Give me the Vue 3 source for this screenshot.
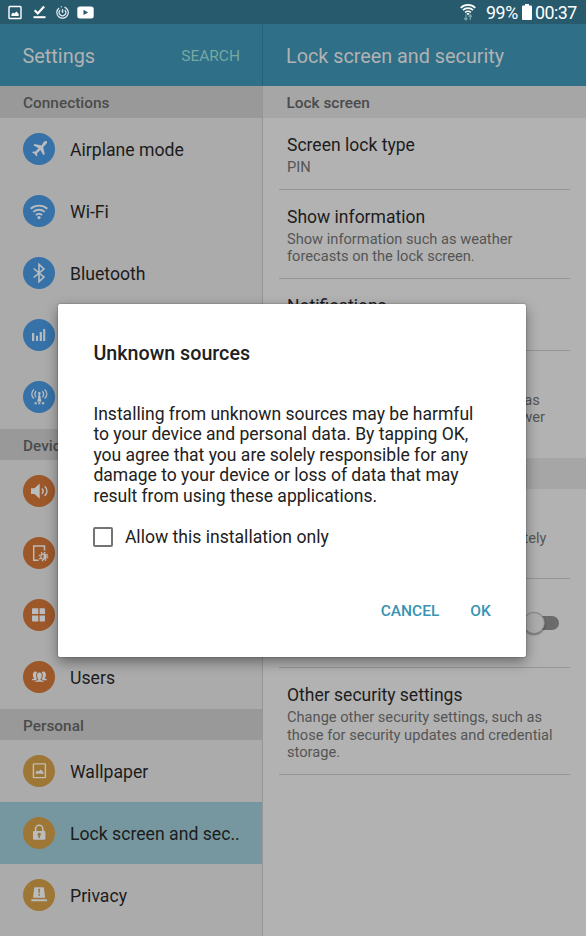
<script setup>
const groups = [
  {
    name: 'Connections', tone: 'blue', items: [
      { label: 'Airplane mode', icon: 'plane' },
      { label: 'Wi-Fi', icon: 'wifi' },
      { label: 'Bluetooth', icon: 'bluetooth' },
      { label: '', icon: 'data' },
      { label: '', icon: 'tower' },
    ],
  },
  {
    name: 'Device', tone: 'orange', items: [
      { label: '', icon: 'sound' },
      { label: '', icon: 'display' },
      { label: '', icon: 'apps' },
      { label: 'Users', icon: 'users' },
    ],
  },
  {
    name: 'Personal', tone: 'amber', items: [
      { label: 'Wallpaper', icon: 'wallpaper' },
      { label: 'Lock screen and sec..', icon: 'lock', active: true },
      { label: 'Privacy', icon: 'privacy' },
    ],
  },
]
</script>

<template>
  <div class="screen">
    <header class="status">
      <div class="status-left">
        <svg class="s-pic" viewBox="0 0 14 14"><rect x="1" y="1" width="12" height="12" rx=".8" fill="none" stroke="#fff" stroke-width="1.4" /><path d="M3.4 10.500V8.700L5 7l1.300 1.100L8.500 6l2.200 2.500v2z" fill="#fff" /></svg>
        <svg class="s-check" viewBox="0 0 13 14"><path d="M1.700 5.300l3.100 3.200 6.300-7" fill="none" stroke="#fff" stroke-width="2.200" /><path d="M.5 11.200h12v2H.5z" fill="#fff" /></svg>
        <svg class="s-swirl" viewBox="0 0 13 13" fill="none" stroke="#e6eef1" stroke-width="1.200"><path d="M3.100 1.900A5.700 5.700 0 1 0 8.500 1.100M4.100 4.100a3.300 3.300 0 1 0 4.700 0" /><path d="M6.500 3.300v3.500" stroke-width="1.500" /><path d="M4.800.9l1-.2" /></svg>
        <svg class="s-tube" viewBox="0 0 17 13"><rect x=".3" y=".4" width="16.400" height="12" rx="2.500" fill="#fff" /><path d="M6.500 3.700v5.400l4.700-2.700z" fill="#285a6d" /></svg>
      </div>
      <div class="status-right">
        <svg class="s-wifi" viewBox="0 0 16 17"><g fill="none" stroke="#fff" stroke-width="1.600"><path d="M.7 3.800a10.500 10.500 0 0 1 14.600 0M2.900 6.200a7.400 7.400 0 0 1 10.200 0M5.100 8.500a4.200 4.200 0 0 1 5.800 0" /></g><path d="M6.300 9.700a2.500 2.500 0 0 1 3.400 0L8 11.300z" fill="#fff" /><path d="M6 10.500v5M4.200 14L6 16l1.500-2M10.300 16v-5M8.700 12.800l1.600-2 1.600 2" fill="none" stroke="#78a4ae" stroke-width="1.200" /></svg>
        <span class="pct">99%</span>
        <svg class="s-batt" viewBox="0 0 10 16"><path d="M3 0h4v1.500h2a1 1 0 0 1 1 1V15a1 1 0 0 1-1 1H1a1 1 0 0 1-1-1V2.500a1 1 0 0 1 1-1h2z" fill="#fff" /></svg>
        <span class="clock">00:37</span>
      </div>
    </header>

    <div class="panes">
      <aside class="side">
        <div class="bar"><span class="bar-title">Settings</span><span class="search">SEARCH</span></div>
        <template v-for="g in groups" :key="g.name">
          <div class="section">{{ g.name }}</div>
          <div v-for="i in g.items" :key="i.icon" class="row" :class="{ active: i.active }">
            <span class="disc" :class="g.tone">
              <svg viewBox="0 0 32 32" fill="#b9bdc0" stroke="none">
                <path v-if="i.icon === 'plane'" d="M23.7 8.300c.8.8.2 2.100-.7 3l-2.800 2.800 1.500 7-1.300 1.200-3-5.200-3.300 3.200.2 2.300-1 1-1.500-2.700-2.700-1.500 1-1 2.300.2 3.200-3.300-5.200-3 1.200-1.300 7 1.500L20.700 9c.9-.9 2.200-1.500 3-.7z" />
                <g v-else-if="i.icon === 'wifi'" fill="none" stroke="#b9bdc0" stroke-width="1.900"><path d="M7.700 13.700a12.800 12.800 0 0 1 16.600 0M10.300 16.900a8.800 8.800 0 0 1 11.400 0M12.900 20a4.700 4.700 0 0 1 6.200 0" /><circle cx="16" cy="22.600" r="1.600" fill="#b9bdc0" stroke="none" /></g>
                <path v-else-if="i.icon === 'bluetooth'" d="M10.700 11.500l10.300 8.600-5 4.600V7.300l5 4.600-10.300 8.600" fill="none" stroke="#b9bdc0" stroke-width="1.600" />
                <path v-else-if="i.icon === 'data'" d="M9 14h2.200v8H9zM13 16.700h2v5.300h-2zM16.700 13h2.200v9h-2.200zM20.200 10h2v12h-2z" />
                <g v-else-if="i.icon === 'tower'" fill="none" stroke="#b9bdc0" stroke-width="1.300"><path d="M11 8.500c-3 2.500-3 6.500 0 9M13.200 10.200c-1.800 1.700-1.800 4.200 0 5.900M21.600 8.500c3 2.500 3 6.500 0 9M19.300 10.200c1.800 1.700 1.800 4.200 0 5.900" /><path d="M16.300 13l-1.300 7h2.600z" fill="#b9bdc0" /><circle cx="16.300" cy="12.300" r="1.300" fill="#b9bdc0" stroke="none" /><path d="M11.500 22.300h2.200M15.200 22.300h2.200M19 22.300h2.200" stroke-width="2" /></g>
                <g v-else-if="i.icon === 'sound'"><path d="M8 13.200h3.500l5.200-4.700v15.200l-5.200-4.800H8z" /><path d="M18.900 13.500c1.600 1.500 1.600 3.700 0 5.200M21.600 11.200c3.200 2.800 3.200 7 0 9.700" fill="none" stroke="#bdbab8" stroke-width="1.500" /></g>
                <g v-else-if="i.icon === 'display'"><path d="M15.600 23.200H10.700V9h10.800v4.500" fill="none" stroke="#bdbab8" stroke-width="1.500" /><circle cx="20.500" cy="19.600" r="3.300" /><circle cx="20.500" cy="19.600" r="4.100" fill="none" stroke="#bdbab8" stroke-width="1.400" stroke-dasharray="1.500 1.720" /><path d="M20.500 17.500a2.100 2.100 0 0 0 0 4.200z" fill="#9c5829" /></g>
                <path v-else-if="i.icon === 'apps'" d="M10 9.300h5.300v5.800H9v-4.800a1 1 0 0 1 1-1zM16.600 9.300h4.400a1 1 0 0 1 1 1v4.800h-5.400zM9 16.500h6.300v6H10a1 1 0 0 1-1-1zM16.600 16.500H22v5a1 1 0 0 1-1 1h-4.400z" />
                <g v-else-if="i.icon === 'users'"><path d="M13 19.300H8.600c0-1.200 1-1.400 2.600-1.900-2-2-1.700-6.600.9-6.900 1 0 1.700.3 1.900.8-1.400 2-1.200 5 .1 6.800zM19.800 19.300h4.400c0-1.200-1-1.400-2.600-1.900 2-2 1.700-6.600-.9-6.900-1 0-1.700.3-1.900.8 1.400 2 1.200 5-.1 6.800z" /><path d="M16.400 11.200c3.300 0 3.200 4.800 1.400 6.800v.9c2 .3 3.400.9 3.400 2.100h-9.600c0-1.200 1.400-1.800 3.400-2.100v-.9c-1.800-2-1.900-6.800 1.400-6.800z" stroke="#9c5829" stroke-width=".5" /></g>
                <g v-else-if="i.icon === 'wallpaper'"><rect x="10.400" y="8.900" width="12" height="13.700" rx=".6" fill="none" stroke="#c1bcb2" stroke-width="1.400" /><path d="M12.700 18.800V17l2-1.400 1 .8 2-2 2.700 2.900v1.500z" /></g>
                <g v-else-if="i.icon === 'lock'"><path d="M12.600 14.500v-2.700a3.600 3.600 0 0 1 7.200 0v2.700" fill="none" stroke="#c1bcb2" stroke-width="1.600" /><path d="M11 14h10.400a1 1 0 0 1 1 1v6.800a1 1 0 0 1-1 1H11a1 1 0 0 1-1-1V15a1 1 0 0 1 1-1z" /><path d="M16.200 15.800a1.700 1.700 0 0 1 .8 3.200v2h-1.600v-2a1.700 1.700 0 0 1 .8-3.200z" fill="#9e7736" /></g>
                <g v-else><path d="M12.200 8.300h7.800a1 1 0 0 1 1 .9l1.100 9.500H10l1.200-9.500a1 1 0 0 1 1-.9zM8.300 20.200h15.600v2H8.300z" /><path d="M15.200 9.700h1.900l-.4 4.800h-1.100zM15.300 15.200h1.700v1.600h-1.700z" fill="#9e7736" /></g>
              </svg>
            </span>
            <span v-if="i.label" class="row-label">{{ i.label }}</span>
          </div>
        </template>
      </aside>

      <main class="detail">
        <div class="bar"><span class="bar-title">Lock screen and security</span></div>
        <div class="section">Lock screen</div>
        <div class="pref h1"><h3>Screen lock type</h3><p>PIN</p></div>
        <div class="pref h2"><h3>Show information</h3><p>Show information such as weather<br>forecasts on the lock screen.</p></div>
        <div class="pref h3"><h3>Notifications</h3></div>
        <div class="pref h4"><p>Set your secure lock functions, such as<br>Auto lock and Lock instantly with power</p></div>
        <div class="section"></div>
        <div class="pref h5"><p>Locate and control your device remotely</p></div>
        <div class="pref h6"><span class="switch"><i class="track"></i><i class="knob"></i></span></div>
        <div class="pref h7"><h3>Other security settings</h3><p>Change other security settings, such as<br>those for security updates and credential<br>storage.</p></div>
      </main>
    </div>

    <div class="dialog" role="dialog">
      <h2>Unknown sources</h2>
      <p class="message">Installing from unknown sources may be harmful<br>to your device and personal data. By tapping OK,<br>you agree that you are solely responsible for any<br>damage to your device or loss of data that may<br>result from using these applications.</p>
      <label class="allow"><span class="box"></span><span>Allow this installation only</span></label>
      <div class="actions"><button>CANCEL</button><button>OK</button></div>
    </div>
  </div>
</template>

<style>
body { margin: 0; background: #b2b2b2; }
</style>

<style scoped>
* { box-sizing: border-box; }
.screen { position: relative; width: 586px; height: 936px; overflow: hidden; background: #b2b2b2; font-family: Roboto, sans-serif; color: #1c1c1c; }
svg { display: block; }
.status { height: 24px; display: flex; justify-content: space-between; background: #285a6d; color: #fff; }
.status-left { display: flex; align-items: center; padding-left: 8px; }
.s-pic { width: 14px; height: 15px; }
.s-check { width: 13px; height: 14px; margin-left: 10.500px; }
.s-swirl { width: 13px; height: 13px; margin-left: 10.500px; }
.s-tube { width: 17px; height: 13px; margin-left: 8px; }
.status-right { display: flex; align-items: center; padding-right: 9px; font-size: 17.800px; line-height: 24px; }
.s-wifi { width: 16px; height: 17px; margin-right: 10px; }
.pct { width: 31px; margin-right: 4.500px; padding-top: 2px; white-space: nowrap; letter-spacing: -.4px; }
.s-batt { width: 10px; height: 16px; margin-right: 3.500px; }
.clock { width: 42px; padding-top: 2px; white-space: nowrap; letter-spacing: -.5px; }

.panes { display: grid; grid-template-columns: 262px 1fr; height: 912px; }
.side { background: #ababab; overflow: hidden; }
.detail { overflow: hidden; background: linear-gradient(90deg, #969696 1px, #b2b2b2 1px); }
.bar { height: 62.300px; display: flex; align-items: center; justify-content: space-between; padding: 2px 22px 0 22.500px; background: #2f6f88; color: #b2b2b2; font-size: 19.900px; }
.detail .bar { padding-left: 23px; border-left: 1px solid #28607a; font-size: 19.800px; }
.search { font-size: 15.500px; color: #75a8a2; }
.section { height: 31.300px; display: flex; align-items: center; padding: 3px 0 0 23px; background: #999; color: #4b4b4b; font-size: 15.400px; font-weight: 500; }
.detail .section { padding-left: 23.500px; border-left: 1px solid #969696; background: #a6a6a6; }
.row { height: 62.200px; display: flex; align-items: center; padding-left: 23px; }
.row.active { background: #76979f; }
.disc { width: 32px; height: 32px; border-radius: 50%; flex: none; }
.disc svg { width: 32px; height: 32px; }
.blue { background: #3672a8; }
.orange { background: #9c5829; }
.amber { background: #9e7736; }
.row-label { margin-left: 15px; padding-top: 2px; font-size: 17.650px; white-space: nowrap; }

.pref { margin: 0 16px 0 17px; padding: 15px 0 0 8px; border-bottom: 1px solid #959595; }
.pref h3 { margin: 0; font-size: 17.550px; font-weight: 400; line-height: 24px; }
.pref p { margin: 2px 0 0; font-size: 14.650px; line-height: 17.600px; color: #555; white-space: nowrap; }
.h1 { height: 72px; }
.h2 { height: 89.500px; }
.h3 { height: 71.500px; }
.h4 { height: 107.500px; padding-top: 39px; border: 0; }
.h5 { height: 89.300px; padding-top: 39px; }
.h6 { height: 89.500px; display: flex; justify-content: flex-end; }
.h7 { height: 106.700px; }
.switch { position: relative; width: 38px; height: 24px; margin: 16px 8px 0 0; }
.track { position: absolute; left: 4px; top: 6px; width: 31px; height: 14px; border-radius: 7px; background: #6b6b6b; }
.knob { position: absolute; left: -1px; top: 2px; width: 22px; height: 22px; border-radius: 50%; background: #adadad; border: 1px solid #858585; box-shadow: 0 1px 2px #0006; }

.dialog { position: absolute; left: 58.400px; top: 303.500px; width: 467.400px; height: 353.300px; padding: 37.500px 35px 0; border-radius: 2px; background: #fff; color: #212121; box-shadow: 0 0 1.500px #0008, 0 5px 13px #0006; }
.dialog h2 { margin: 0; font-size: 19.700px; line-height: 26px; font-weight: 500; }
.message { margin: 36.500px 0 0; font-size: 17.550px; line-height: 20.600px; white-space: nowrap; }
.allow { display: flex; align-items: center; gap: 11.500px; height: 24px; margin-top: 18.500px; font-size: 17.600px; }
.box { width: 20px; height: 20px; border: 2px solid #747474; border-radius: 2px; }
.actions { display: flex; justify-content: flex-end; gap: 31px; margin-top: 50.500px; }
button { margin: 0; padding: 0; border: 0; background: none; font: 500 15.500px/24px Roboto, sans-serif; color: #3893b3; }
</style>
